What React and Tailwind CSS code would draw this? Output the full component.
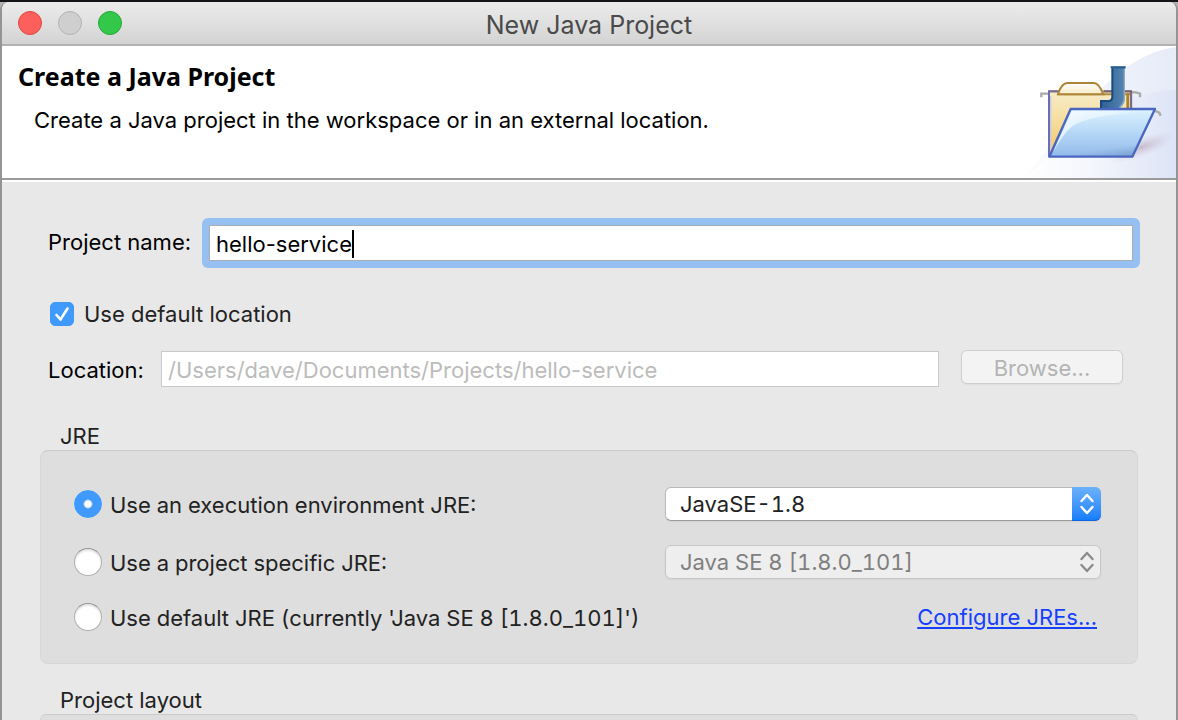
import React from "react";

function ProjectBanner() {
  return (
    <svg viewBox="0 18 474 396" className="h-[132px] w-[158px] shrink-0" aria-hidden="true">
      <defs>
        <linearGradient id="sweep" x1="0" y1="0" x2="1" y2="0">
          <stop offset="0" stopColor="#fff" />
          <stop offset="0.45" stopColor="#f4f6fc" />
          <stop offset="1" stopColor="#dde4f6" />
        </linearGradient>
        <linearGradient id="sweepTop" x1="0" y1="0" x2="1" y2="0">
          <stop offset="0" stopColor="#fbfcfe" />
          <stop offset="1" stopColor="#e6ebf8" />
        </linearGradient>
        <linearGradient id="paper" x1="0" y1="0" x2="0" y2="1">
          <stop offset="0" stopColor="#f7ecc9" />
          <stop offset="0.5" stopColor="#f5dc9c" />
          <stop offset="1" stopColor="#f6c65f" />
        </linearGradient>
        <linearGradient id="tab" x1="0" y1="0" x2="0" y2="1">
          <stop offset="0" stopColor="#ffffff" />
          <stop offset="1" stopColor="#f6e9c2" />
        </linearGradient>
        <linearGradient id="front" x1="0" y1="0" x2="0" y2="1">
          <stop offset="0" stopColor="#dcf3ff" />
          <stop offset="0.5" stopColor="#b5d7f6" />
          <stop offset="1" stopColor="#93baea" />
        </linearGradient>
        <linearGradient id="corner" x1="0.6" y1="0.3" x2="0.85" y2="1">
          <stop offset="0.65" stopColor="#6f93c8" stopOpacity="0" />
          <stop offset="1" stopColor="#5c7fb5" stopOpacity="0.6" />
        </linearGradient>
        <linearGradient id="gloss" x1="0" y1="0" x2="1" y2="0">
          <stop offset="0" stopColor="#fff" stopOpacity="0.75" />
          <stop offset="1" stopColor="#fff" stopOpacity="0.1" />
        </linearGradient>
        <linearGradient id="letter" x1="0" y1="0" x2="1" y2="0">
          <stop offset="0" stopColor="#2d5f92" />
          <stop offset="1" stopColor="#5685b1" />
        </linearGradient>
        <radialGradient id="shade">
          <stop offset="0" stopColor="#b09aac" stopOpacity="0.6" />
          <stop offset="1" stopColor="#cfc6dc" stopOpacity="0" />
        </radialGradient>
      </defs>
      <path d="M20 414 C150 250 300 40 474 22 V414 Z" fill="url(#sweepTop)" />
      <path d="M20 414 C160 280 300 150 474 150 V414 Z" fill="url(#sweep)" />
      <ellipse cx="370" cy="322" rx="110" ry="30" transform="rotate(-20 370 322)" fill="url(#shade)" />
      <g fill="none" stroke="#a9a9a9" strokeWidth="7">
        <path d="M70 172 V161 H92" />
        <path d="M340 157 H354 L366 161 V172" />
        <path d="M132 226 V218 L138 214 H152 M145 214 V226" />
        <path d="M412 213 L424 218 L428 227" />
      </g>
      <path d="M94 153 H340 V212 H160 L94 345 Z" fill="url(#paper)" />
      <path d="M119 163 H340" stroke="#b58d3f" strokeWidth="6" />
      <path d="M329 160 V205" stroke="#a8822c" strokeWidth="8" />
      <path d="M339 153 V205" stroke="#7c6a86" strokeWidth="7" />
      <path d="M256 154 H342" stroke="#7a6268" strokeWidth="7" />
      <path d="M90 154 H124" stroke="#7a6c90" strokeWidth="7" />
      <path d="M93 152 V350" stroke="#6a6fb5" strokeWidth="6" />
      <path d="M98 168 V330" stroke="#cfc9e2" strokeWidth="4" />
      <path d="M120 163 C124 150 134 129 148 129 H228 C240 129 250 148 256 163 Z" fill="url(#tab)" stroke="#ad8437" strokeWidth="6" />
      <path d="M282 82 H320 V176 C320 192 310 204 296 206 H248 V182 H272 C280 182 283 177 283 168 Z" fill="url(#letter)" />
      <path d="M283 82 V168 C283 177 280 183 272 183 H249 V206" fill="none" stroke="#174a7e" strokeWidth="6" />
      <path d="M278 82 H323" stroke="#2a5f92" strokeWidth="7" />
      <path d="M319 88 V176 C318 190 311 197 304 203" fill="none" stroke="#8aacc9" strokeWidth="4" />
      <path d="M158 207 H411 L343 350 H94 Z" fill="url(#front)" />
      <path d="M158 207 H411 L343 350 H94 Z" fill="url(#corner)" />
      <path d="M162 212 H400 C290 222 200 232 164 258 C140 276 122 308 104 338 Z" fill="url(#gloss)" />
      <path d="M158 207 H411 L343 350 H94 Z" fill="none" stroke="#4a66c0" strokeWidth="7" strokeLinejoin="round" />
    </svg>
  );
}

function Chevrons() {
  return (
    <svg viewBox="0 0 14 22" className="h-[22px] w-3.5" fill="none" stroke="currentColor" strokeWidth="2.4" strokeLinecap="round" strokeLinejoin="round" aria-hidden="true">
      <path d="M1.5 8 L7 2 L12.500 8" />
      <path d="M1.500 14 L7 20 L12.500 14" />
    </svg>
  );
}

function JreSelect({ label, value, disabled }) {
  return (
    <div className="relative w-[436px]">
      <select
        aria-label={label}
        disabled={disabled}
        className={
          disabled
            ? "block h-[34px] w-full appearance-none rounded-md border border-[#c6c6c6] bg-[#eeeeee] pr-8 pl-3.5 text-[22px] leading-7 text-[#7f7f7f] tabular-nums opacity-100 shadow-xs"
            : "block h-[34px] w-full appearance-none rounded-md border border-[#b9b9b9] border-b-[#9c9c9c] bg-white pr-8 pl-3.5 text-[22px] leading-7 text-[#222222] tabular-nums shadow-xs"
        }
      >
        <option>{value}</option>
      </select>
      <span
        className={
          disabled
            ? "pointer-events-none absolute inset-y-0 right-0 flex w-[29px] items-center justify-center text-[#8c8c8c]"
            : "pointer-events-none absolute inset-y-0 right-0 flex w-[29px] items-center justify-center rounded-r-md border-b border-[#0f62e0] bg-linear-to-b from-[#6bb2fa] to-[#157dfb] text-white"
        }
      >
        <Chevrons />
      </span>
    </div>
  );
}

function JreOption({ id, label, checked }) {
  return (
    <div className="flex items-center gap-2">
      <input
        type="radio"
        name="jre"
        id={id}
        defaultChecked={checked}
        className="size-7 shrink-0 appearance-none rounded-full border border-[#b0b0b0] border-t-[#969696] bg-white shadow-[inset_0_2px_2px_#e4e4e4] checked:border-[#3f9afb] checked:bg-[radial-gradient(circle,#fff_3px,#3f9afb_5px)] checked:shadow-none"
      />
      <label htmlFor={id} className="pt-0.5 text-[#222222] tabular-nums">{label}</label>
    </div>
  );
}

export default function App() {
  return (
    <div className="flex min-h-screen flex-col bg-[#b4b4b4] pt-0.5 font-['Inter','Liberation_Sans',sans-serif] text-[22px] leading-7 text-black shadow-[inset_0_2px_0_#141518]">
      <main className="flex flex-1 flex-col rounded-t-lg border-r-2 border-l-2 border-[#949494] bg-[#e8e8e8]">
        <header className="grid h-11 grid-cols-[1fr_auto_1fr] items-center rounded-t-lg border-b-2 border-[#b2b2b2] bg-linear-to-b from-[#ececec] to-[#d3d3d3] px-4">
          <div className="flex gap-4">
            <button aria-label="Close" className="size-6 rounded-full border border-[#e2463f] bg-[#fc605c]" />
            <button aria-label="Minimize" disabled className="size-6 rounded-full border border-[#b3b3b3] bg-[#cfcfcf]" />
            <button aria-label="Zoom" className="size-6 rounded-full border border-[#22a934] bg-[#34c84a]" />
          </div>
          <h1 className="pt-1 text-[25px] leading-8 text-[#4a4a4a]">New Java Project</h1>
        </header>

        <section className="flex justify-between border-b-2 border-[#9b9b9b] bg-white">
          <div className="pt-4 pl-4">
            <h2 className="font-['Noto_Sans','Open_Sans',sans-serif] text-[25px] leading-7 font-bold">Create a Java Project</h2>
            <p className="mt-4 pl-4">Create a Java project in the workspace or in an external location.</p>
          </div>
          <ProjectBanner />
        </section>

        <form className="flex flex-1 flex-col border-t-2 border-white px-[38px] pt-9">
          <div className="flex items-center gap-2.5 pl-2">
            <label htmlFor="project-name" className="w-36 shrink-0 pb-0.5">Project name:</label>
            <div className="relative mr-[-2px] min-w-0 flex-1 rounded-md bg-[#95c0f1] p-[7px]">
              <input
                id="project-name"
                defaultValue="hello-service"
                className="block h-9 w-full border border-[#a9aeb4] bg-white px-1.5 pt-0.5 caret-transparent outline-none"
              />
              <span className="absolute top-3 left-[150px] h-7 w-0.5 bg-black" />
            </div>
          </div>

          <div className="mt-[34px] flex h-6 items-center gap-2.5 pl-2.5">
            <span className="relative size-6">
              <input id="default-location" type="checkbox" defaultChecked className="peer block size-6 appearance-none rounded-[5px] border border-[#b0b0b0] bg-white checked:border-[#3f9afb] checked:bg-[#3f9afb]" />
              <svg viewBox="0 0 24 24" className="pointer-events-none absolute inset-0 hidden size-6 peer-checked:block" fill="none" stroke="#fff" strokeWidth="2.6" strokeLinecap="round" strokeLinejoin="round" aria-hidden="true">
                <path d="M6.500 13 L10.500 17.500 L17.500 6.500" />
              </svg>
            </span>
            <label htmlFor="default-location" className="text-[#222222]">Use default location</label>
          </div>

          <div className="mt-6 flex items-center pr-[15px] pl-2">
            <label htmlFor="location" className="w-[113px] shrink-0 pt-0.5">Location:</label>
            <input
              id="location"
              disabled
              defaultValue="/Users/dave/Documents/Projects/hello-service"
              className="block h-9 min-w-0 flex-1 border border-[#c9c9c9] bg-white px-1.5 pt-0.5 text-[#bcbcbc]"
            />
            <button type="button" disabled className="mb-1 ml-[22px] h-[34px] w-[162px] rounded-md border border-[#cfcfcf] bg-[#f3f3f3] pt-0.5 text-[#b4b4b4] shadow-xs">
              Browse...
            </button>
          </div>

          <h3 id="jre-title" className="mt-[34px] pl-5 text-[#222222]">JRE</h3>
          <div role="group" aria-labelledby="jre-title" className="flex flex-col gap-6 rounded-lg border border-[#d6d6d6] border-t-[#cbcbcb] bg-[#dedede] pt-9 pr-9 pb-8 pl-[33px]">
            <div className="flex h-[34px] items-center justify-between">
              <JreOption id="jre-env" label="Use an execution environment JRE:" checked />
              <JreSelect label="Execution environment" value="JavaSE-1.8" />
            </div>
            <div className="flex h-[34px] items-center justify-between">
              <JreOption id="jre-project" label="Use a project specific JRE:" />
              <JreSelect label="Project JRE" value="Java SE 8 [1.8.0_101]" disabled />
            </div>
            <div className="flex h-7 items-center justify-between pr-1">
              <JreOption id="jre-default" label="Use default JRE (currently 'Java SE 8 [1.8.0_101]')" />
              <a href="#configure-jres" className="text-[#1540ff] underline decoration-2 underline-offset-2">Configure JREs...</a>
            </div>
          </div>

          <h3 id="layout-title" className="mt-[22px] pl-5 text-[#222222]">Project layout</h3>
          <div role="group" aria-labelledby="layout-title" className="flex-1 rounded-t-lg border border-b-0 border-[#d6d6d6] border-t-[#cbcbcb] bg-[#dedede]" />
        </form>
      </main>
    </div>
  );
}
